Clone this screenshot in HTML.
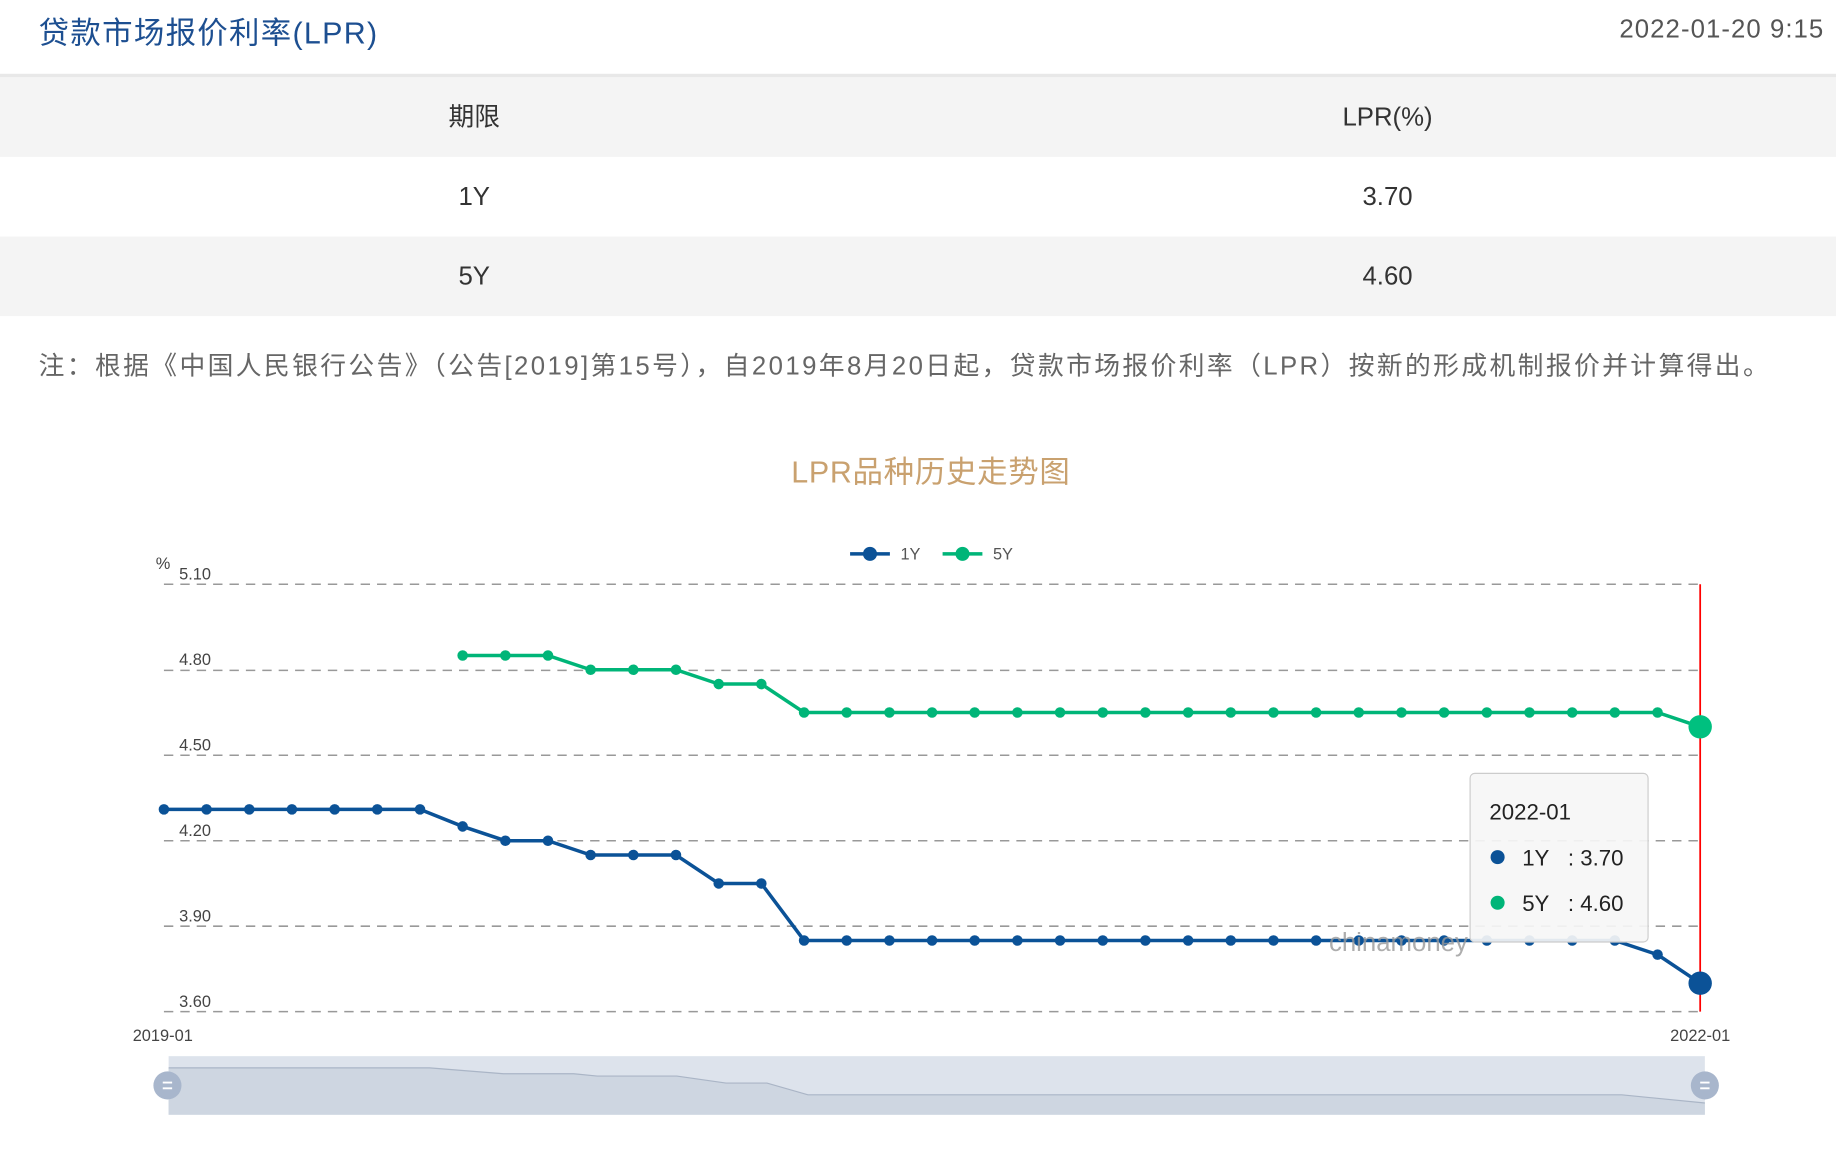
<!DOCTYPE html>
<html><head><meta charset="utf-8"><style>
html,body{margin:0;padding:0;background:#fff;overflow:hidden}
body{width:1836px;height:1170px}
#w{position:absolute;left:0;top:0;width:1568px;height:1000px;transform:scale(1.17092);transform-origin:0 0;font-family:"Liberation Sans","Noto Sans CJK SC",sans-serif}
.t{position:absolute;left:33px;top:8px;font-size:26px;letter-spacing:1.1px;color:#1d4f91;white-space:nowrap}
.d{position:absolute;right:10px;top:12px;font-size:22px;letter-spacing:0.9px;color:#555}
.hl{position:absolute;left:0;top:63px;width:1568px;height:3px;background:#e8e8e8}
.row{position:absolute;left:0;width:1568px;height:68px;font-size:22px;color:#333}
.row span{position:absolute;top:0;line-height:68px;transform:translateX(-50%);white-space:nowrap}
.n{position:absolute;left:33px;top:295px;font-size:22px;letter-spacing:2.05px;color:#666;white-space:nowrap}
</style></head><body><div id="w">
<div class="t">贷款市场报价利率(LPR)</div>
<div class="d">2022-01-20 9:15</div>
<div class="hl"></div>
<div class="row" style="top:66px;background:#f4f4f4"><span style="left:405px">期限</span><span style="left:1185px">LPR(%)</span></div>
<div class="row" style="top:134px"><span style="left:405px">1Y</span><span style="left:1185px">3.70</span></div>
<div class="row" style="top:202px;background:#f4f4f4"><span style="left:405px">5Y</span><span style="left:1185px">4.60</span></div>
<div class="n">注：根据《中国人民银行公告》（公告[2019]第15号），自2019年8月20日起，贷款市场报价利率（LPR）按新的形成机制报价并计算得出。</div>
<svg style="position:absolute;left:0;top:0" width="1568" height="1000" font-family="Liberation Sans, sans-serif">
<defs>
<marker id="mb" markerUnits="userSpaceOnUse" markerWidth="12" markerHeight="12" refX="6" refY="6"><circle cx="6" cy="6" r="4.5" fill="#0b5297"/></marker>
<marker id="mg" markerUnits="userSpaceOnUse" markerWidth="12" markerHeight="12" refX="6" refY="6"><circle cx="6" cy="6" r="4.5" fill="#00b578"/></marker>
</defs>
<text x="795" y="412" text-anchor="middle" font-size="26" letter-spacing="0.6" fill="#c9a16f" font-family="Liberation Sans, Noto Sans CJK SC, sans-serif">LPR品种历史走势图</text>
<line x1="726" y1="473" x2="760" y2="473" stroke="#0b5297" stroke-width="3"/><circle cx="743" cy="473" r="6" fill="#0b5297"/>
<text x="769" y="478" font-size="14" fill="#555">1Y</text>
<line x1="805" y1="473" x2="839" y2="473" stroke="#00b578" stroke-width="3"/><circle cx="822" cy="473" r="6" fill="#00b578"/>
<text x="848" y="478" font-size="14" fill="#555">5Y</text>
<text x="133" y="486" font-size="14" fill="#444">%</text>
<g stroke="#999" stroke-width="1.3" stroke-dasharray="8,6">
<line x1="140" y1="499" x2="1452" y2="499"/><line x1="140" y1="572.5" x2="1452" y2="572.5"/><line x1="140" y1="645" x2="1452" y2="645"/><line x1="140" y1="718" x2="1452" y2="718"/><line x1="140" y1="791" x2="1452" y2="791"/><line x1="140" y1="864" x2="1452" y2="864"/>
</g>
<g font-size="14" fill="#444"><text x="153" y="495">5.10</text><text x="153" y="568">4.80</text><text x="153" y="641">4.50</text><text x="153" y="714">4.20</text><text x="153" y="787">3.90</text><text x="153" y="860">3.60</text></g>
<text x="139" y="889" font-size="14" fill="#444" text-anchor="middle">2019-01</text>
<text x="1452" y="889" font-size="14" fill="#444" text-anchor="middle">2022-01</text>
<polyline fill="none" stroke="#0b5297" stroke-width="3" marker-start="url(#mb)" marker-mid="url(#mb)" points="140,691.2 176.4,691.2 212.9,691.2 249.3,691.2 285.8,691.2 322.2,691.2 358.7,691.2 395.1,705.8 431.6,718 468,718 504.4,730.2 540.9,730.2 577.3,730.2 613.8,754.5 650.2,754.5 686.7,803.2 723.1,803.2 759.6,803.2 796,803.2 832.4,803.2 868.9,803.2 905.3,803.2 941.8,803.2 978.2,803.2 1014.7,803.2 1051.1,803.2 1087.6,803.2 1124,803.2 1160.4,803.2 1196.9,803.2 1233.3,803.2 1269.8,803.2 1306.2,803.2 1342.7,803.2 1379.1,803.2 1415.6,815.3 1452,839.7"/>
<polyline fill="none" stroke="#00b578" stroke-width="3" marker-start="url(#mg)" marker-mid="url(#mg)" points="395.1,559.8 431.6,559.8 468,559.8 504.4,572 540.9,572 577.3,572 613.8,584.2 650.2,584.2 686.7,608.5 723.1,608.5 759.6,608.5 796,608.5 832.4,608.5 868.9,608.5 905.3,608.5 941.8,608.5 978.2,608.5 1014.7,608.5 1051.1,608.5 1087.6,608.5 1124,608.5 1160.4,608.5 1196.9,608.5 1233.3,608.5 1269.8,608.5 1306.2,608.5 1342.7,608.5 1379.1,608.5 1415.6,608.5 1452,620.7"/>
<line x1="1452" y1="499" x2="1452" y2="864" stroke="#f00" stroke-width="1.5"/>
<circle cx="1452" cy="620.7" r="10" fill="#00c07f"/>
<circle cx="1452" cy="839.7" r="10" fill="#0b5297"/>
<text x="1135" y="812" font-size="22" fill="#999" opacity="0.8">chinamoney</text>
<rect x="1255.5" y="660.5" width="152" height="144" rx="4" fill="rgba(246,246,246,0.92)" stroke="#ccc" stroke-width="1"/>
<text x="1272" y="700" font-size="19" fill="#222">2022-01</text>
<circle cx="1279" cy="732" r="6" fill="#0b5297"/><text x="1300" y="739" font-size="19" fill="#222">1Y</text><text x="1339" y="739" font-size="19" fill="#222">: 3.70</text>
<circle cx="1279" cy="771" r="6" fill="#00b578"/><text x="1300" y="778" font-size="19" fill="#222">5Y</text><text x="1339" y="778" font-size="19" fill="#222">: 4.60</text>
<rect x="144" y="902" width="1312" height="50" fill="#dde3ec"/>
<path d="M144,912 L367,912 L430,917 L490,917 L510,919 L578,919 L620,925 L655,925 L690,935 L1385,935 L1456,942 L1456,952 L144,952 Z" fill="#ced6e1" stroke="none"/>
<path d="M144,912 L367,912 L430,917 L490,917 L510,919 L578,919 L620,925 L655,925 L690,935 L1385,935 L1456,942" fill="none" stroke="#aab5c6" stroke-width="1"/>
<circle cx="143" cy="927" r="12" fill="#a8b6cc"/><path d="M139,924.5h8M139,929.5h8" stroke="#fff" stroke-width="1.6"/>
<circle cx="1456" cy="927" r="12" fill="#a8b6cc"/><path d="M1452,924.5h8M1452,929.5h8" stroke="#fff" stroke-width="1.6"/>
</svg>
</div></body></html>
